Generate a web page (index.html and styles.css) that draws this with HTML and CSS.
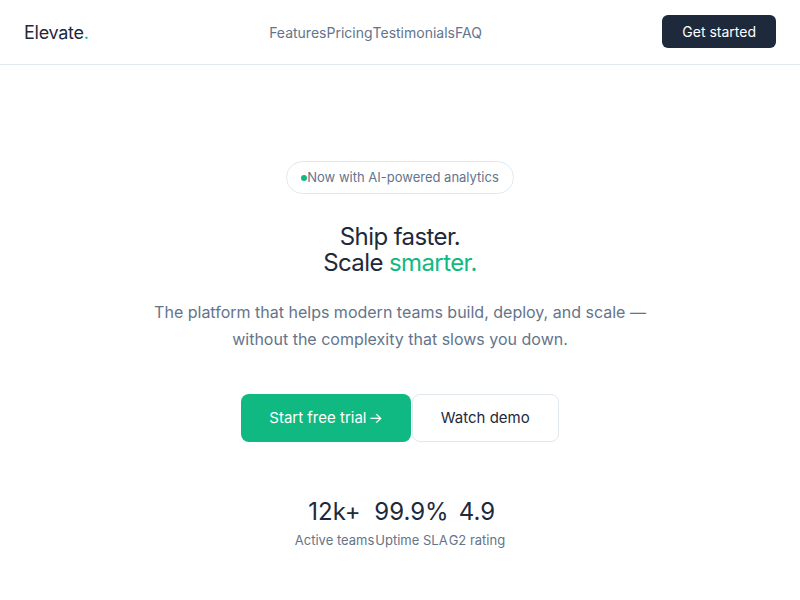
FILE: index.html
```html
<!DOCTYPE html>
<html lang="en">
<head>
<meta charset="utf-8">
<title>Elevate</title>
<link rel="stylesheet" href="styles.css">
</head>
<body>
<header class="header">
  <div class="logo">Elevate<span class="accent">.</span></div>
  <nav class="nav">
    <a href="#">Features</a><a href="#">Pricing</a><a href="#">Testimonials</a><a href="#">FAQ</a>
  </nav>
  <a class="btn-dark" href="#">Get started</a>
</header>
<main class="hero">
  <div class="badge"><span class="dot"></span><span>Now with AI-powered analytics</span></div>
  <h1 class="title">Ship faster.<br>Scale <span class="accent">smarter.</span></h1>
  <p class="lead">The platform that helps modern teams build, deploy, and scale — without the complexity that slows you down.</p>
  <div class="actions">
    <a class="btn btn-primary" href="#"><span>Start free trial</span><span class="arrow">→</span></a>
    <a class="btn btn-secondary" href="#">Watch demo</a>
  </div>
  <div class="stats">
    <div class="stat"><div class="num">12k+</div><div class="label">Active teams</div></div>
    <div class="stat"><div class="num">99.9%</div><div class="label">Uptime SLA</div></div>
    <div class="stat"><div class="num">4.9</div><div class="label">G2 rating</div></div>
  </div>
</main>
</body>
</html>
```
FILE: styles.css
```css
* { box-sizing: border-box; }
body {
  margin: 0;
  font-family: Inter, "Liberation Sans", sans-serif;
  color: #1e293b;
  background: #ffffff;
}
a { text-decoration: none; color: inherit; }
.accent { color: #10b981; }

.header {
  height: 65px;
  padding: 0 24px;
  display: flex;
  align-items: center;
  justify-content: space-between;
  border-bottom: 1px solid #e2e8f0;
}
.logo { font-size: 18px; font-weight: 400; letter-spacing: -0.015em; color: #1e293b; }
.nav { display: flex; gap: 0; font-size: 14px; color: #64748b; }
.btn-dark {
  background: #1e293b;
  color: #ffffff;
  font-size: 14px;
  line-height: 17px;
  padding: 8px 20px;
  border-radius: 6px;
  margin-top: -1px;
}

.hero {
  padding-top: 96px;
  display: flex;
  flex-direction: column;
  align-items: center;
  text-align: center;
}
.badge {
  display: flex;
  align-items: center;
  font-size: 13px;
  line-height: 19px;
  color: #64748b;
  padding: 6px 14px;
  border: 1px solid #e2e8f0;
  border-radius: 999px;
}
.dot {
  width: 6px;
  height: 6px;
  border-radius: 50%;
  background: #10b981;
}
.title {
  margin: 30px 0 0;
  font-size: 24px;
  line-height: 26px;
  font-weight: 400;
  letter-spacing: -0.025em;
  color: #1e293b;
}
.lead {
  margin: 23px 0 0;
  max-width: 520px;
  font-size: 16px;
  line-height: 27px;
  color: #64748b;
}
.actions {
  margin-top: 41px;
  display: flex;
  gap: 1px;
}
.btn {
  display: flex;
  align-items: center;
  font-size: 15px;
  line-height: 18px;
  padding: 14px 28px;
  border-radius: 8px;
  border: 1px solid transparent;
}
.btn-primary { background: #10b981; color: #ffffff; padding-left: 27px; padding-right: 27px; }
.arrow { margin-left: 2px; }
.btn-secondary { background: #ffffff; border-color: #e2e8f0; color: #1e293b; }

.stats {
  margin-top: 55px;
  display: flex;
  gap: 0;
}
.stat { display: flex; flex-direction: column; align-items: center; }
.num { font-size: 24px; line-height: 29px; color: #1e293b; }
.label { margin-top: 5px; font-size: 13px; line-height: 19px; color: #64748b; }
```
